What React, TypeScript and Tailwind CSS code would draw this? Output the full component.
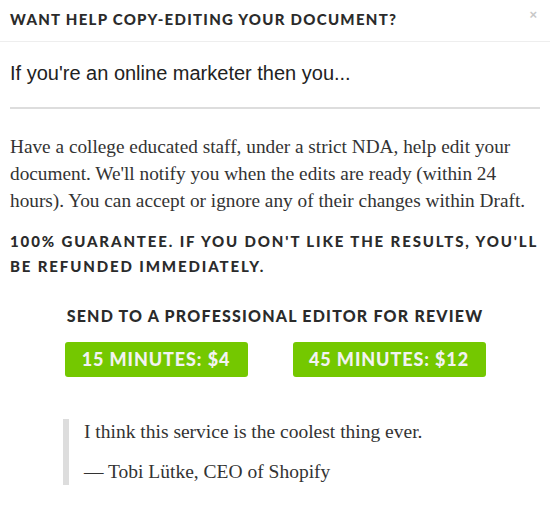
const sans = "font-['Lato','DejaVu_Sans',sans-serif]";

function PriceButton({ label, width }: { label: string; width: string }) {
  return (
    <button
      className={`${width} h-[35px] whitespace-nowrap rounded-[3px] bg-[#74c800] text-[18px] font-black tracking-[0.05em] text-[#f2f2f2]`}
    >
      {label}
    </button>
  );
}

export default function App() {
  return (
    <div className="h-[512px] w-[550px] bg-white text-[#333]">
      <header className="flex h-[42px] items-start justify-between border-b border-[#eee] pl-[10px] pr-[13px] pt-[8px]">
        <h1 className={`${sans} text-[15px] font-black tracking-[0.085em] text-[#2b2b2b]`}>
          WANT HELP COPY-EDITING YOUR DOCUMENT?
        </h1>
        <span className="font-['Liberation_Sans',sans-serif] text-[13px] font-bold leading-none text-[#c8c8c8]">
          ×
        </span>
      </header>

      <div className="px-[10px]">
        <p className="pt-[16px] font-['Liberation_Sans',Arial,sans-serif] text-[20px] text-[#222]">
          If you're an online marketer then you...
        </p>
        <hr className="mt-[19px] border-t-2 border-[#ddd]" />

        <p className="mt-[24px] font-['Liberation_Serif',Georgia,serif] text-[19.3px] leading-[27px] text-[#333]">
          Have a college educated staff, under a strict NDA, help edit your document. We'll notify you when
          the edits are ready (within 24 hours). You can accept or ignore any of their changes within Draft.
        </p>

        <p
          className={`${sans} mt-[15px] w-[528px] text-[15px] font-black leading-[25px] tracking-[0.125em] text-[#2b2b2b]`}
        >
          100% GUARANTEE. IF YOU DON'T LIKE THE RESULTS, YOU'LL BE REFUNDED IMMEDIATELY.
        </p>
      </div>

      <section className="mt-[25px] flex flex-col items-center">
        <h2 className={`${sans} text-[16px] font-black tracking-[0.075em] text-[#2b2b2b]`}>
          SEND TO A PROFESSIONAL EDITOR FOR REVIEW
        </h2>
        <div className={`${sans} mt-[14px] flex gap-[45px]`}>
          <PriceButton label="15 MINUTES: $4" width="w-[183px]" />
          <PriceButton label="45 MINUTES: $12" width="w-[193px]" />
        </div>
      </section>

      <blockquote className="ml-[63px] mt-[42px] border-l-[6px] border-[#ddd] pl-[15px] font-['Liberation_Serif',Georgia,serif] text-[19.5px] text-[#333]">
        <p className="leading-[26px]">I think this service is the coolest thing ever.</p>
        <p className="mt-[14px] leading-[26px]">— Tobi Lütke, CEO of Shopify</p>
      </blockquote>
    </div>
  );
}
